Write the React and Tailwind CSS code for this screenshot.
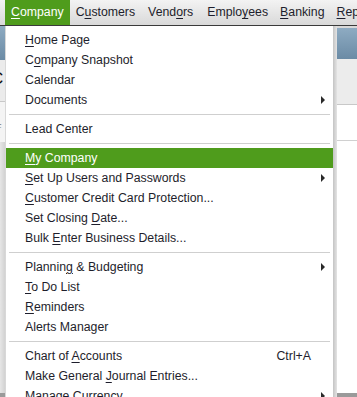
import React from "react";

const U = ({ children }) => <span className="underline underline-offset-2 decoration-1">{children}</span>;

function Arrow() {
  return (
    <svg width="5" height="8" viewBox="0 0 5 8" className="absolute right-[7px] top-[6px]">
      <polygon points="0,0 4,4 0,8" fill="#2a2a2a" />
    </svg>
  );
}

function Item({ children, arrow, shortcut, active }) {
  return (
    <div
      className={
        "relative h-[20px] flex items-center pl-[19px] pr-[8px] whitespace-nowrap " +
        (active ? "bg-[#4f9c1c] text-white" : "text-[#1e1e2c]")
      }
    >
      <span>{children}</span>
      {shortcut && <span className="ml-auto mr-[14px]">{shortcut}</span>}
      {arrow && <Arrow />}
    </div>
  );
}

function Sep() {
  return (
    <div className="h-[9px] pt-[4px] pl-[3px] pr-[3px]">
      <div className="h-px bg-[#cfcfcf]" />
    </div>
  );
}

export default function App() {
  return (
    <div
      className="w-[357px] h-[397px] overflow-hidden bg-white flex flex-col text-[12.3px] leading-none"
      style={{ fontFamily: '"Liberation Sans", Arial, sans-serif' }}
    >
      {/* menu bar */}
      <div className="h-[25px] shrink-0 flex items-stretch bg-gradient-to-b from-[#f3f3f3] to-[#d9d9d9] text-[#1e1e2c] whitespace-nowrap">
        <div className="ml-[5px] px-[6px] flex items-center bg-[#4f9c1c] text-white">
          <U>C</U>ompany
        </div>
        <div className="px-[6px] flex items-center">
          C<U>u</U>stomers
        </div>
        <div className="px-[6px] flex items-center ml-[1px]">
          Vend<U>o</U>rs
        </div>
        <div className="px-[6px] flex items-center ml-[2px]">
          Emplo<U>y</U>ees
        </div>
        <div className="px-[6px] flex items-center">
          <U>B</U>anking
        </div>
        <div className="px-[6px] flex items-center">
          <U>R</U>eports
        </div>
      </div>
      <div className="h-px shrink-0 bg-[#3a3a3a]" />

      {/* body */}
      <div className="flex-1 flex min-h-0">
        {/* left background strip */}
        <div className="w-[5px] shrink-0 flex flex-col overflow-hidden">
          <div className="h-[34px] bg-gradient-to-b from-[#8eabc2] to-[#6b8ba5]" />
          <div className="h-[41px] bg-[#ebebeb] relative overflow-hidden">
            <span className="absolute left-[-9px] top-[10px] text-[17px] text-[#111]">C</span>
          </div>
          <div className="h-px bg-[#c8c8c8]" />
          <div className="h-[40px] bg-[#f4f4f4] relative overflow-hidden">
            <span className="absolute left-[-4px] top-[21px] text-[9px] text-[#777]">F</span>
          </div>
          <div className="flex-1 bg-gradient-to-r from-[#e6e6e6] to-[#d2d2d2]" />
          <div className="h-[4px] bg-[#9a9a9a]" />
        </div>

        {/* dropdown */}
        <div className="w-[328px] shrink-0 bg-white pt-[4px] border-l border-[#d8d8d8]">
          <Item><U>H</U>ome Page</Item>
          <Item>C<U>o</U>mpany Snapshot</Item>
          <Item>Calendar</Item>
          <Item arrow>Documents</Item>
          <Sep />
          <Item>Lead Center</Item>
          <Sep />
          <Item active><U>M</U>y Company</Item>
          <Item arrow><U>S</U>et Up Users and Passwords</Item>
          <Item><U>C</U>ustomer Credit Card Protection...</Item>
          <Item>Set Closing <U>D</U>ate...</Item>
          <Item>Bulk <U>E</U>nter Business Details...</Item>
          <Sep />
          <Item arrow>Plannin<U>g</U> &amp; Budgeting</Item>
          <Item><U>T</U>o Do List</Item>
          <Item><U>R</U>eminders</Item>
          <Item>Alerts Manager</Item>
          <Sep />
          <Item shortcut="Ctrl+A">Chart of <U>A</U>ccounts</Item>
          <Item>Make General <U>J</U>ournal Entries...</Item>
          <Item arrow>Manage Currency</Item>
        </div>

        {/* shadow */}
        <div className="w-[4px] shrink-0 bg-gradient-to-r from-[#c4c4c4] to-[#e4e4e4]" />

        {/* right background */}
        <div className="flex-1 flex flex-col">
          <div className="h-[2px] bg-[#d9d9d9]" />
          <div className="h-[31px] bg-gradient-to-b from-[#8eabc2] to-[#6b8ba5]" />
          <div className="h-[45px] bg-[#ececec]" />
          <div className="h-px bg-[#c8c8c8]" />
          <div className="h-[35px] bg-white" />
          <div className="h-px bg-[#d0d0d0]" />
          <div className="flex-1 bg-white" />
          <div className="h-[4px] bg-[#9a9a9a]" />
        </div>
      </div>
    </div>
  );
}
